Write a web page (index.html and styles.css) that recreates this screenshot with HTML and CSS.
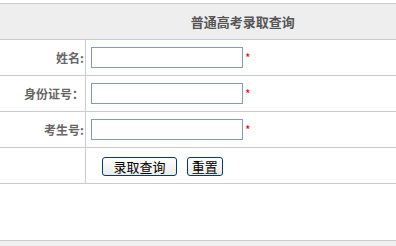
FILE: index.html
```html
<!DOCTYPE html>
<html>
<head>
  <meta charset="UTF-8">
  <title>普通高考录取查询</title>
  <link rel="stylesheet" href="styles.css">
</head>
<body>
  <div class="page">
    <table class="form">
      <tr class="head">
        <td></td>
        <td class="title">普通高考录取查询</td>
      </tr>
      <tr>
        <td class="label">姓名:</td>
        <td class="field"><input type="text" class="txt"><span class="req">*</span></td>
      </tr>
      <tr>
        <td class="label">身份证号：</td>
        <td class="field"><input type="text" class="txt"><span class="req">*</span></td>
      </tr>
      <tr>
        <td class="label">考生号:</td>
        <td class="field"><input type="text" class="txt"><span class="req">*</span></td>
      </tr>
      <tr>
        <td class="label"></td>
        <td class="btns">
          <button class="btn btn-query">录取查询</button>
          <button class="btn btn-reset">重置</button>
        </td>
      </tr>
    </table>
    <div class="spacer"></div>
    <div class="foot"></div>
  </div>
</body>
</html>
```

FILE: styles.css
```css
body { margin: 0; background: #fff; font-family: "Noto Sans CJK SC", "DejaVu Sans", sans-serif; font-size: 12px; }
.page { padding-top: 3px; }
.form { width: 100%; border-collapse: collapse; border-top: 1px solid #cccccc; }
.form td { padding: 0; border-bottom: 1px solid #cccccc; height: 35px; }
.head td { background: #eeeeee; height: 35px; }
.title { text-align: center; font-weight: bold; font-size: 13px; color: #555555; padding-left: 4px !important; }
.label { width: 84px; text-align: right; font-weight: bold; color: #666666; border-right: 1px solid #cccccc; padding-right: 1px !important; }
.head td:first-child { width: 84px; }
.field { padding-left: 5px !important; }
.txt {
  box-sizing: border-box;
  width: 152px;
  height: 21px;
  margin: 0;
  border: 1px solid #7f9db9;
  vertical-align: middle;
}
.req { color: #ff0000; font-size: 12px; margin-left: 2px; vertical-align: middle; }
.btns { padding-left: 16px !important; }
.btn {
  box-sizing: border-box;
  height: 19px;
  margin: 0;
  padding: 0;
  border: 1px solid #003c74;
  border-radius: 3px;
  background: linear-gradient(#ffffff, #ecebe4);
  font-family: "Noto Sans CJK SC", sans-serif;
  font-size: 13px;
  line-height: 17px;
  color: #000;
  vertical-align: middle;
}
.btn-query { width: 75px; margin-right: 7px; }
.btn-reset { width: 36px; }
.spacer { height: 56px; }
.foot { border-top: 1px solid #cccccc; background: #f0f0f0; height: 10px; }
```
